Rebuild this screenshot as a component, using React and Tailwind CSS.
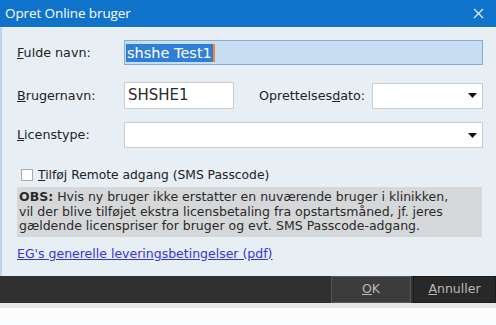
import React from "react";

const Arrow = () => (
  <svg width="9" height="5" viewBox="0 0 9 5" className="shrink-0">
    <path d="M0 0 H9 L4.5 5 Z" fill="#111" />
  </svg>
);

export default function App() {
  return (
    <div
      className="w-[496px] h-[325px] bg-white flex flex-col overflow-hidden"
      style={{ fontFamily: '"DejaVu Sans", Verdana, sans-serif' }}
    >
      {/* Title bar */}
      <div className="h-[27px] bg-[#0f73cc] flex items-center justify-between pl-[5px] pr-[12px] shrink-0">
        <span className="text-white text-[13.5px] tracking-[-0.1px]" style={{ fontFamily: '"Open Sans", "Noto Sans", sans-serif' }}>
          Opret Online bruger
        </span>
        <svg width="11" height="11" viewBox="0 0 11 11">
          <path d="M1 1 L10 10 M10 1 L1 10" stroke="#dbe9f7" strokeWidth="1.4" />
        </svg>
      </div>

      {/* Body */}
      <div className="h-[249px] bg-[#e7eef4] border-l-[2px] border-[#b9d4ec] border-t border-t-[#f3f7fa] flex flex-col pl-[15px] pr-[13px] pt-[12px] text-[12.7px] text-[#222]">
        {/* Fulde navn */}
        <div className="flex items-center h-[25px]">
          <div className="w-[107px]"><span className="underline">F</span>ulde navn:</div>
          <div className="flex-1 h-[25px] bg-[#c7ddf1] border border-[#86acd0] flex items-center pl-[1px]">
            <span className="bg-[#2f7fd6] text-white text-[14.5px] px-[1px] leading-[18px]">shshe Test1</span>
            <span className="w-[2px] h-[18px] bg-[#f08a24]" />
          </div>
        </div>

        {/* Brugernavn / Oprettelsesdato */}
        <div className="flex items-center h-[27px] mt-[17px]">
          <div className="w-[107px]"><span className="underline">B</span>rugernavn:</div>
          <div className="w-[110px] h-[27px] bg-white border border-[#c9ccd0] flex items-center pl-[3px] text-[15px] text-[#2a2a2a]">
            SHSHE1
          </div>
          <div className="flex-1 text-right pr-[7px]">Oprettelses<span className="underline">d</span>ato:</div>
          <div className="w-[111px] h-[26px] bg-white border border-[#c9ccd0] flex items-center justify-end pr-[5px]">
            <Arrow />
          </div>
        </div>

        {/* Licenstype */}
        <div className="flex items-center h-[26px] mt-[13px]">
          <div className="w-[107px]"><span className="underline">L</span>icenstype:</div>
          <div className="flex-1 h-[26px] bg-white border border-[#c9ccd0] flex items-center justify-end pr-[5px]">
            <Arrow />
          </div>
        </div>

        {/* Checkbox */}
        <div className="flex items-center mt-[20px] pl-[4px] h-[14px] text-[12.3px]">
          <div className="w-[12px] h-[12px] bg-white border border-[#a8abaf]" />
          <span className="ml-[5px]"><span className="underline">T</span>ilføj Remote adgang (SMS Passcode)</span>
        </div>

        {/* OBS box */}
        <div className="mt-[5px] bg-[#d5d7d9] px-[2px] pt-[3px] pb-[3px] text-[12.5px] leading-[14.5px] text-[#2a2a2a] mr-[1px] whitespace-nowrap">
          <span className="font-bold">OBS:</span> Hvis ny bruger ikke erstatter en nuværende bruger i klinikken,
          <br />
          vil der blive tilføjet ekstra licensbetaling fra opstartsmåned, jf. jeres
          <br />
          gældende licenspriser for bruger og evt. SMS Passcode-adgang.
        </div>

        {/* Link */}
        <div className="mt-[8px] text-[12.5px] text-[#3535d8] underline">
          EG's generelle leveringsbetingelser (pdf)
        </div>
      </div>

      {/* Footer */}
      <div className="h-[27px] bg-[#303030] flex justify-end items-stretch shrink-0">
        <div className="w-[80px] bg-[#3c3c3c] border border-[#555] flex items-center justify-center text-[12.5px] text-[#b8b8b8] mr-[2px]">
          <span className="underline">O</span>K
        </div>
        <div className="w-[83px] bg-[#282828] border border-[#1c1c1c] flex items-center justify-center text-[12.5px] text-[#b8b8b8]">
          <span className="underline">A</span>nnuller
        </div>
      </div>
      <div className="h-[5px] bg-[#e6e6e6] shrink-0" />
      <div className="flex-1 bg-[#fbfcfd]" />
    </div>
  );
}
